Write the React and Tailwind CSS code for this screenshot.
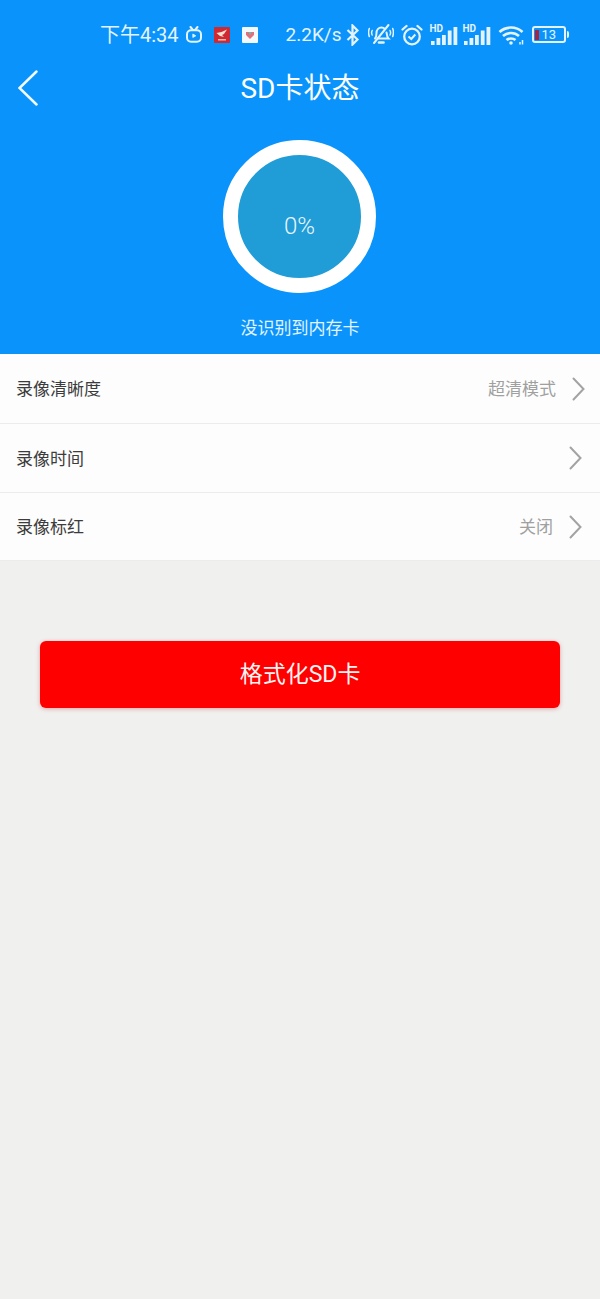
import { useState } from 'react';

const FONT = "font-['Roboto','Noto_Sans_CJK_SC',sans-serif]";

const TvIcon = () => (
    <svg width="16" height="17" viewBox="0 0 16 17" fill="none" stroke="#e4f3ff" strokeWidth="2">
        <path d="M4.500 1l2.500 3M11.500 1L9 4" strokeLinecap="round" />
        <rect x="1" y="4.200" width="14" height="11.500" rx="4" />
        <path d="M6.800 8v3.500l3-1.700z" fill="#e4f3ff" strokeWidth="0.8" />
    </svg>
);

const AppIconRed = () => (
    <svg width="16" height="16" viewBox="0 0 16 16">
        <rect width="16" height="16" rx="1" fill="#cf2a34" />
        <path d="M2.500 6l5-1 5.500-2.500-3 4.500-2 1 2 2-4-1z" fill="#f5e3d0" />
        <rect x="4" y="12" width="8" height="1.500" fill="#f2b8a8" />
    </svg>
);

const AppIconWhite = () => (
    <svg width="16" height="16" viewBox="0 0 16 16">
        <rect width="16" height="16" rx="1" fill="#f4f9fb" />
        <path d="M4 5h3.500L8 7l.5-2H12v3l-4 4-4-4z" fill="#e2707c" />
        <path d="M6.500 5h3L8 8.500z" fill="#5dbcaa" />
    </svg>
);

const BluetoothIcon = () => (
    <svg width="14" height="22" viewBox="0 0 14 22" fill="none" stroke="#e4f3ff" strokeWidth="2.200">
        <path d="M1.500 6l10 9.500L6.500 20.500V1.500l5 5L1.500 16" />
    </svg>
);

const MuteBellIcon = () => (
    <svg width="26" height="23" viewBox="0 0 26 23" fill="none" stroke="#e4f3ff" strokeWidth="2" strokeLinecap="round">
        <path d="M7 15.500c1.500-1.500 1.500-3 1.500-5.500 0-3 2-5.500 5-5.500 1.500 0 2.500.5 3.500 1.500M18.500 9.500c.3 2.500.5 4.500 2 6H10" />
        <path d="M11 19.500h4.500" strokeWidth="2.600" />
        <path d="M6 20L20.500 2" />
        <path d="M4.200 7.500c-.8 1.500-.8 3 0 4.500M1.300 5.500c-1 2.500-1 5 0 8M22 7.500c.8 1.500.8 3 0 4.500M24.700 5.500c1 2.500 1 5 0 8" strokeWidth="1.500" />
    </svg>
);

const AlarmIcon = () => (
    <svg width="22" height="22" viewBox="0 0 22 22" fill="none" stroke="#e4f3ff" strokeWidth="2.300">
        <circle cx="11" cy="12.500" r="7.800" />
        <path d="M7.500 12.500l2.800 2.500 4-4.500" strokeWidth="2" />
        <path d="M1.500 5.500L5.500 2M20.500 5.500L16.500 2" strokeLinecap="round" />
    </svg>
);

const SignalIcon = () => (
    <div className="relative h-[22px] w-[28px]">
        <span className="absolute left-0 top-0 text-[10px] font-bold leading-[9px] text-[#e4f3ff]">HD</span>
        <svg className="absolute left-0 top-0" width="28" height="22" viewBox="0 0 28 22" fill="#e4f3ff">
            <rect x="1" y="17" width="3.600" height="4" />
            <rect x="6.500" y="14" width="3.800" height="7" />
            <rect x="12" y="11" width="3.800" height="10" />
            <rect x="17.800" y="6.500" width="3.800" height="14.500" />
            <rect x="23.500" y="3" width="3.800" height="18" />
        </svg>
    </div>
);

const WifiIcon = () => (
    <svg width="26" height="20" viewBox="0 0 26 20" fill="none" stroke="#e4f3ff" strokeWidth="2.700">
        <path d="M1.500 7c6.500-6 16.500-6 23 0" />
        <path d="M5 11c4.500-4 11.500-4 16 0" />
        <path d="M8.500 15c2.500-2 6.500-2 9 0" />
        <circle cx="13" cy="18" r="1.800" fill="#e4f3ff" stroke="none" />
        <path d="M22 17v2.500M24.500 15v4.500" strokeWidth="1.500" />
    </svg>
);

const BatteryIcon = () => (
    <div className="flex items-center">
        <div className="flex h-[17px] w-[34px] items-center rounded-[3px] border-2 border-[#e4f3ff] px-[1px]">
            <span className="h-[10px] w-[4px] bg-[#a8243c]" />
            <span className="ml-[3px] text-[13px] leading-none text-[#e4f3ff]">13</span>
        </div>
        <span className="ml-[1px] h-[7px] w-[2px] rounded-r-sm bg-[#e4f3ff]" />
    </div>
);

const Chevron = ({ className = '' }) => (
    <svg className={className} width="13" height="24" viewBox="0 0 13 24" fill="none" stroke="#a3a3a3" strokeWidth="2" strokeLinecap="round">
        <path d="M1.500 1.500L11.500 12L1.500 22.500" />
    </svg>
);

const rows = [
    { label: '录像清晰度', value: '超清模式', h: 'h-[70px]', pr: 'pr-[15px]', gap: 'ml-[16px]', pt: 'pt-[2px]' },
    { label: '录像时间', value: '', h: 'h-[69px]', pr: 'pr-[18px]', gap: '', pt: 'pt-[4px]' },
    { label: '录像标红', value: '关闭', h: 'h-[68px]', pr: 'pr-[18px]', gap: 'ml-[16px]', pt: 'pt-[2px]' },
];

const SettingRow = ({ label, value, h, pr, gap, pt }) => (
    <div className={`flex items-center justify-between border-b border-[#ececec] bg-[#fdfdfd] pl-[16px] ${h} ${pr}`}>
        <span className={`text-[17px] text-[#3c3c3c] ${pt}`}>{label}</span>
        <div className="flex items-center">
            {value && <span className={`text-[17px] text-[#a0a0a0] ${pt}`}>{value}</span>}
            <Chevron className={gap} />
        </div>
    </div>
);

export default function App() {
    const [percent] = useState(0);

    return (
        <div className={`flex min-h-[1299px] flex-col bg-[#f0f0ef] ${FONT}`}>
            {/* Cabecera azul */}
            <header className="flex h-[354px] flex-col items-center bg-[#0a94fb] text-white">
                <div className="flex h-[70px] w-full items-center self-start pb-[1px] pl-[100px]">
                    <span className="text-[20px] leading-none text-[#e4f3ff]">下午4:34</span>
                    <span className="ml-[7px]"><TvIcon /></span>
                    <span className="ml-[12px]"><AppIconRed /></span>
                    <span className="ml-[12px]"><AppIconWhite /></span>
                    <span className="ml-[28px] text-[19px] leading-none text-[#e4f3ff]">2.2K/s</span>
                    <span className="ml-[4px]"><BluetoothIcon /></span>
                    <span className="ml-[8px]"><MuteBellIcon /></span>
                    <span className="ml-[7px]"><AlarmIcon /></span>
                    <span className="ml-[7px]"><SignalIcon /></span>
                    <span className="ml-[5px]"><SignalIcon /></span>
                    <span className="ml-[7px]"><WifiIcon /></span>
                    <span className="ml-[8px]"><BatteryIcon /></span>
                </div>

                <div className="relative flex h-[36px] w-full items-center justify-center">
                    <svg className="absolute left-[18px] top-0" width="20" height="36" viewBox="0 0 20 36" fill="none" stroke="#f2f9ff" strokeWidth="2.500" strokeLinecap="round">
                        <path d="M18.500 1.500L1.500 18L18.500 34.500" />
                    </svg>
                    <h1 className="pt-[2px] text-[28px] font-normal leading-none">SD卡状态</h1>
                </div>

                <div className="mt-[34px] mr-[1px] flex h-[153px] w-[153px] items-center justify-center rounded-full border-[15px] border-white bg-[#209cd6]">
                    <span className="pt-[18px] text-[24px] font-light text-[#e8f6ff]">{percent}%</span>
                </div>
                <p className="mt-[23px] text-[17px] leading-[24px] text-[#e4f3ff]">没识别到内存卡</p>
            </header>

            {/* Lista de ajustes */}
            <div>
                {rows.map((row) => (
                    <SettingRow key={row.label} {...row} />
                ))}
            </div>

            <button className="mx-[40px] mt-[80px] flex h-[67px] items-center justify-center rounded-[6px] bg-[#ff0000] pt-[2px] text-[23px] font-normal text-[#fff4f4] shadow-[0_1px_4px_rgba(200,60,60,0.4)]">
                格式化SD卡
            </button>
        </div>
    );
}
